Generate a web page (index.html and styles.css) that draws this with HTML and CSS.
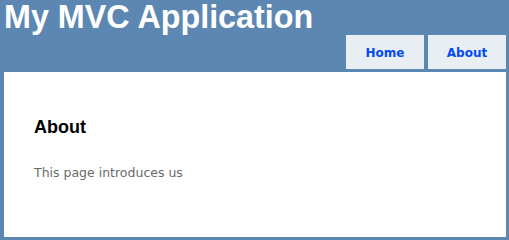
FILE: index.html
```html
<!DOCTYPE html>
<html>
<head>
<meta charset="utf-8">
<title>About</title>
<link rel="stylesheet" href="styles.css">
</head>
<body>
<div class="page">
  <header class="header">
    <h1 class="title">My MVC Application</h1>
    <nav class="menu">
      <a class="tab" href="#">Home</a>
      <a class="tab" href="#">About</a>
    </nav>
  </header>
  <main class="main">
    <h2 class="heading">About</h2>
    <p class="text">This page introduces us</p>
  </main>
</div>
</body>
</html>
```
FILE: styles.css
```css
html, body {
  margin: 0;
  padding: 0;
  height: 100%;
}
body {
  background: #5c87b2;
  font-family: "DejaVu Sans", Verdana, sans-serif;
  font-size: 12px;
}
.page {
  box-sizing: border-box;
  height: 100vh;
  display: flex;
  flex-direction: column;
  padding: 0 3px 3px 4px;
}
.header {
  display: flex;
  flex-direction: column;
}
.title {
  margin: 0;
  color: #fff;
  font-family: "Liberation Sans", Arial, sans-serif;
  font-weight: bold;
  font-size: 32.3px;
  line-height: 34px;
}
.menu {
  display: flex;
  justify-content: flex-end;
  gap: 4px;
  margin-top: 1px;
}
.tab {
  display: block;
  width: 78px;
  box-sizing: border-box;
  text-align: center;
  padding: 11px 0 9px;
  line-height: 14px;
  background: #e8eef4;
  color: #034af3;
  font-weight: bold;
  text-decoration: none;
}
.main {
  flex: 1;
  margin-top: 3px;
  background: #fff;
  padding: 30px;
}
.heading {
  margin: 15px 0 0;
  color: #000;
  font-family: "Liberation Sans", Arial, sans-serif;
  font-size: 18px;
  font-weight: bold;
  line-height: 21px;
}
.text {
  margin: 25px 0 0;
  color: #696969;
  font-size: 12.5px;
  line-height: 19px;
}
```
